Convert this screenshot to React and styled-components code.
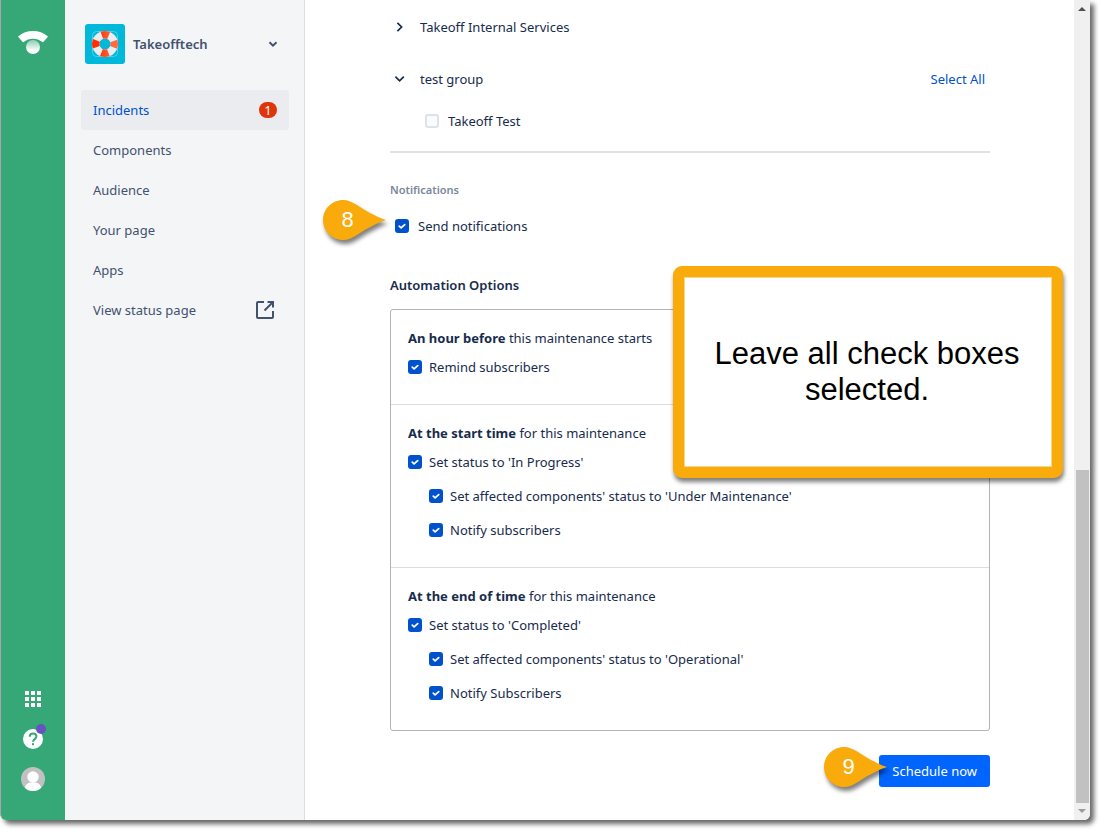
import React from "react";
import styled, { createGlobalStyle, css } from "styled-components";

const amber = "#f8ab0b";
const navy = "#172b4d";

const GlobalStyle = createGlobalStyle`
  * { box-sizing: border-box; }
  body {
    margin: 0;
    background: #fff;
    color: ${navy};
    font-family: "Noto Sans", "Open Sans", sans-serif;
    font-size: 13px;
    line-height: 20px;
  }
  button, input { font: inherit; margin: 0; }
`;

const Page = styled.div`
  min-height: 100vh;
  padding: 0 15px 15px 0;
  display: flex;
  overflow: hidden;
`;

const Window = styled.div`
  flex: 1;
  display: flex;
  border-radius: 0 0 6px 6px;
  box-shadow: 4px 4px 5px rgba(0, 0, 0, 0.6);
  background: #fff;
`;

const Rail = styled.nav`
  width: 65px;
  flex: none;
  display: flex;
  flex-direction: column;
  align-items: center;
  justify-content: space-between;
  padding: 30px 0 28px;
  background: #36a878;
  border-left: 1px solid #aaa4ac;
  border-bottom-left-radius: 6px;
`;

const RailGroup = styled.div`
  display: flex;
  flex-direction: column;
  align-items: center;
  gap: 14px;
`;

const IconButton = styled.button`
  display: grid;
  place-items: center;
  width: 26px;
  height: 26px;
  padding: 0;
  border: 0;
  background: none;
  color: inherit;
  position: relative;
  svg { display: block; overflow: visible; }
`;

const Dot = styled.span`
  position: absolute;
  top: -2px;
  right: 0;
  width: 10px;
  height: 10px;
  border-radius: 50%;
  background: #6554c0;
`;

const Sidebar = styled.aside`
  width: 240px;
  flex: none;
  padding: 24px 15px 0 16px;
  background: #f4f5f7;
  border-right: 1px solid #dddfe3;
`;

const Project = styled.button`
  width: 100%;
  display: flex;
  align-items: center;
  gap: 8px;
  padding: 0 10px 0 4px;
  margin-bottom: 26px;
  border: 0;
  background: none;
  color: #42526e;
  font-weight: 600;
  text-align: left;
  svg { display: block; flex: none; }
`;

const ProjectName = styled.span`
  flex: 1;
`;

const NavItem = styled.a`
  display: flex;
  align-items: center;
  justify-content: space-between;
  height: 40px;
  padding: 0 12px;
  border-radius: 3px;
  text-decoration: none;
  color: ${(p) => (p.$active ? "#0052cc" : "#42526e")};
  background: ${(p) => (p.$active ? "#ebecf0" : "transparent")};
`;

const Badge = styled.span`
  width: 18px;
  height: 16px;
  border-radius: 8px;
  background: #de350b;
  color: #fff;
  font-size: 13px;
  line-height: 16px;
  text-align: center;
`;

const Main = styled.main`
  flex: 1;
  min-width: 0;
  padding: 17px 84px 33px 85px;
`;

const GroupRow = styled.div`
  display: flex;
  align-items: center;
  justify-content: space-between;
  margin-bottom: ${(p) => (p.$open ? 22 : 32)}px;
`;

const Disclosure = styled.button`
  display: flex;
  align-items: center;
  gap: 10px;
  padding: 0;
  border: 0;
  background: none;
  color: ${navy};
  svg { display: block; }
`;

const TextLink = styled.a`
  color: #0052cc;
  text-decoration: none;
  margin-right: 5px;
`;

const Divider = styled.hr`
  height: 2px;
  margin: 20px 0 27px;
  border: 0;
  background: #dfe1e6;
`;

const FieldLabel = styled.div`
  margin-bottom: 16px;
  color: #7a869a;
  font-size: 11px;
  font-weight: 600;
`;

const Heading = styled.h2`
  margin: 0 0 14px;
  font-size: 13px;
  line-height: 20px;
  font-weight: 600;
`;

const OptionLabel = styled.label`
  display: flex;
  align-items: center;
  gap: ${(p) => (p.$wide ? 9 : 7)}px;
  padding-left: ${(p) => p.$indent || 0}px;
`;

const CheckCell = styled.span`
  display: grid;
  width: 14px;
  height: 14px;
  > * { grid-area: 1 / 1; }
  svg { pointer-events: none; display: block; }
`;

const CheckInput = styled.input`
  appearance: none;
  width: 14px;
  height: 14px;
  border-radius: 3px;
  border: 2px solid #dfe1e6;
  background: #fafbfc;
  &:checked {
    border-color: #0052cc;
    background: #0052cc;
  }
  &:not(:checked) + svg { visibility: hidden; }
`;

const Pinned = styled.div`
  position: relative;
  display: ${(p) => (p.$end ? "flex" : "block")};
  justify-content: flex-end;
  margin-bottom: ${(p) => (p.$end ? 0 : 39)}px;
`;

const PinBox = styled.span`
  position: absolute;
  width: 63px;
  height: 40px;
  color: #fff;
  font-family: "Liberation Sans", Arial, sans-serif;
  font-size: 22px;
  line-height: 40px;
  ${(p) =>
    p.$before
      ? css`right: 103px; top: -8px;`
      : css`left: -67px; top: -16px;`}
  svg {
    position: absolute;
    inset: 0;
    overflow: visible;
    filter: drop-shadow(2px 4px 2px rgba(0, 0, 0, 0.5));
  }
  span {
    position: absolute;
    left: 0;
    width: 49px;
    text-align: center;
  }
`;

const Automation = styled.section`
  position: relative;
  margin-bottom: 24px;
`;

const Panel = styled.div`
  border: 1px solid #b3b3b3;
  border-radius: 3px;
`;

const Step = styled.fieldset`
  min-width: 0;
  margin: 0;
  border: 0;
  padding: 18px 17px 27px;
  display: flex;
  flex-direction: column;
  gap: 14px;
  & + & { border-top: 1px solid #dcdcdc; }
`;

const StepTitle = styled.div`
  margin-bottom: -5px;
  b { font-weight: 700; }
`;

const Callout = styled.div`
  position: absolute;
  top: -9px;
  right: -73px;
  width: 390px;
  height: 212px;
  display: grid;
  place-items: center;
  padding: 0 22px 0 20px;
  border: 11px solid ${amber};
  border-radius: 9px;
  background: #fff;
  box-shadow: 1px 4px 4px rgba(0, 0, 0, 0.5), inset 0 0 0 1px #fbd689;
  color: #000;
  font-family: "Liberation Sans", Arial, sans-serif;
  font-size: 31px;
  line-height: 36px;
  text-align: center;
`;

const Primary = styled.button`
  height: 32px;
  padding: 0 13px;
  border: 0;
  border-radius: 3px;
  background: #0065ff;
  color: #fff;
`;

const ScrollTrack = styled.div`
  width: 16px;
  flex: none;
  display: flex;
  flex-direction: column;
  align-items: center;
  padding: 7px 0 7px;
  background: #f0f0f0;
  border-bottom-right-radius: 6px;
  svg { display: block; flex: none; }
`;

const ScrollThumb = styled.div`
  flex: 333 0 0;
  width: 13px;
  margin-bottom: 6px;
  background: #c1c1c1;
`;

const ScrollSpace = styled.div`
  flex: 459 0 0;
`;

function Check({ label, indent, wide, checked = true }) {
  return (
    <OptionLabel $indent={indent} $wide={wide}>
      <CheckCell>
        <CheckInput type="checkbox" defaultChecked={checked} />
        <svg width="14" height="14" viewBox="0 0 14 14" fill="none" stroke="#fff" strokeWidth="1.8" strokeLinecap="round" strokeLinejoin="round">
          <path d="M4.300 7.200 6.100 8.800 9.700 5.600" />
        </svg>
      </CheckCell>
      {label}
    </OptionLabel>
  );
}

function Pin({ n, before }) {
  return (
    <PinBox $before={before}>
      <svg width="63" height="40" viewBox="0 0 63 40">
        <path d="M20 0C9 0 0 9 0 20s9 20 20 20c5 0 9-2 14-5C42 30 51 24 63 20 51 16 42 10 34 5 29 2 25 0 20 0Z" fill={amber} />
      </svg>
      <span>{n}</span>
    </PinBox>
  );
}

function Chevron({ right }) {
  return (
    <svg width="20" height="20" viewBox="0 0 20 20" fill="none" stroke="currentColor" strokeWidth="1.7">
      <path d={right ? "M7.4 5.8 11.6 10 7.4 14.2" : "M5.4 7.6 9.6 11.8 13.8 7.6"} />
    </svg>
  );
}

function Logo() {
  return (
    <svg width="30" height="25" viewBox="0 0 30 25">
      <defs>
        <linearGradient id="logo-fade" x1="0" y1="0" x2="0" y2="1">
          <stop offset="0.1" stopColor="#fff" stopOpacity="0.5" />
          <stop offset="0.75" stopColor="#fff" />
        </linearGradient>
      </defs>
      <circle cx="15" cy="17" r="7" fill="url(#logo-fade)" />
      <path d="M.4 6.200C8-.700 22-.700 29.600 6.200c.3.3.3.6.1.9l-4.400 5c-.3.3-.6.3-.9 0-5.300-4.600-13.500-4.600-18.800 0-.3.3-.6.3-.9 0L.3 7.100c-.2-.3-.2-.6.1-.9Z" fill="#fff" />
    </svg>
  );
}

function LifeRing() {
  return (
    <svg width="40" height="40" viewBox="0 0 40 40">
      <defs>
        <linearGradient id="ring-red" x1="0" y1="0" x2="1" y2="0">
          <stop offset="0.1" stopColor="#ff2f00" />
          <stop offset="0.9" stopColor="#ff6a3f" />
        </linearGradient>
      </defs>
      <rect width="40" height="40" rx="3" fill="#00b8d9" />
      <rect x="7.500" y="7.500" width="25" height="25" rx="4" fill="none" stroke="#4fcfe5" />
      <circle cx="20" cy="20" r="9.250" fill="none" stroke="#ebecf0" strokeWidth="7.500" />
      <circle cx="20" cy="20" r="9.250" fill="none" stroke="url(#ring-red)" strokeWidth="7.500" strokeDasharray="7 7.530" strokeDashoffset="3.500" />
    </svg>
  );
}

export default function App() {
  return (
    <Page>
      <GlobalStyle />
      <Window>
        <Rail aria-label="Product">
          <Logo />
          <RailGroup>
            <IconButton aria-label="Switch product">
              <svg width="16" height="16" viewBox="0 0 16 16" fill="#fff">
                {[0, 6, 12].map((y) => [0, 6, 12].map((x) => <rect key={x + "-" + y} x={x} y={y} width="4" height="4" />))}
              </svg>
            </IconButton>
            <IconButton aria-label="Help">
              <svg width="20" height="20" viewBox="0 0 20 20">
                <circle cx="10" cy="10" r="10" fill="#fff" />
                <path d="M6.700 7.800C6.700 5.700 8.100 4.500 10 4.500s3.400 1.200 3.400 3c0 2.500-3.400 2.700-3.400 5.200" fill="none" stroke="#36a878" strokeWidth="2" />
                <rect x="9" y="14.200" width="2" height="2" fill="#36a878" />
              </svg>
              <Dot />
            </IconButton>
            <IconButton aria-label="Account">
              <svg width="24" height="24" viewBox="0 0 24 24">
                <clipPath id="avatar"><circle cx="12" cy="12" r="12" /></clipPath>
                <g clipPath="url(#avatar)">
                  <rect width="24" height="24" fill="#c1c1c1" />
                  <circle cx="12" cy="10" r="5.700" fill="#fff" />
                  <path d="M3.500 24c0-5 2-7.500 5.500-8.500h6c3.500 1 5.500 3.500 5.500 8.500Z" fill="#fff" />
                </g>
              </svg>
            </IconButton>
          </RailGroup>
        </Rail>
        <Sidebar>
          <Project>
            <LifeRing />
            <ProjectName>Takeofftech</ProjectName>
            <svg width="12" height="12" viewBox="0 0 12 12" fill="none" stroke="#42526e" strokeWidth="2"><path d="M2.500 4.200 6 7.600 9.500 4.200" /></svg>
          </Project>
          <NavItem href="#incidents" $active>Incidents<Badge>1</Badge></NavItem>
          <NavItem href="#components">Components</NavItem>
          <NavItem href="#audience">Audience</NavItem>
          <NavItem href="#page">Your page</NavItem>
          <NavItem href="#apps">Apps</NavItem>
          <NavItem href="#status">
            View status page
            <svg width="24" height="24" viewBox="0 0 24 24" fill="none" stroke="#42526e" strokeWidth="2">
              <path d="M11 4H5a1 1 0 0 0-1 1v14a1 1 0 0 0 1 1h14a1 1 0 0 0 1-1v-6M14.500 4H20v5.500M20 4l-8.500 8.500" />
            </svg>
          </NavItem>
        </Sidebar>
        <Main>
          <GroupRow>
            <Disclosure aria-expanded="false"><Chevron right />Takeoff Internal Services</Disclosure>
          </GroupRow>
          <GroupRow $open>
            <Disclosure aria-expanded="true"><Chevron />test group</Disclosure>
            <TextLink href="#all">Select All</TextLink>
          </GroupRow>
          <Check label="Takeoff Test" indent={35} wide checked={false} />
          <Divider />
          <FieldLabel>Notifications</FieldLabel>
          <Pinned>
            <Check label="Send notifications" indent={5} wide />
            <Pin n="8" />
          </Pinned>
          <Automation>
            <Heading>Automation Options</Heading>
            <Panel>
              <Step>
                <StepTitle><b>An hour before</b> this maintenance starts</StepTitle>
                <Check label="Remind subscribers" />
              </Step>
              <Step>
                <StepTitle><b>At the start time</b> for this maintenance</StepTitle>
                <Check label="Set status to 'In Progress'" />
                <Check label="Set affected components' status to 'Under Maintenance'" indent={21} />
                <Check label="Notify subscribers" indent={21} />
              </Step>
              <Step>
                <StepTitle><b>At the end of time</b> for this maintenance</StepTitle>
                <Check label="Set status to 'Completed'" />
                <Check label="Set affected components' status to 'Operational'" indent={21} />
                <Check label="Notify Subscribers" indent={21} />
              </Step>
            </Panel>
            <Callout>Leave all check boxes selected.</Callout>
          </Automation>
          <Pinned $end>
            <Primary>Schedule now</Primary>
            <Pin n="9" before />
          </Pinned>
        </Main>
        <ScrollTrack aria-hidden="true">
          <svg width="8" height="4" viewBox="0 0 8 4"><path d="M0 4 4 0l4 4Z" fill="#505050" /></svg>
          <ScrollSpace />
          <ScrollThumb />
          <svg width="8" height="4" viewBox="0 0 8 4"><path d="M0 0h8L4 4Z" fill="#9a9a9a" /></svg>
        </ScrollTrack>
      </Window>
    </Page>
  );
}
